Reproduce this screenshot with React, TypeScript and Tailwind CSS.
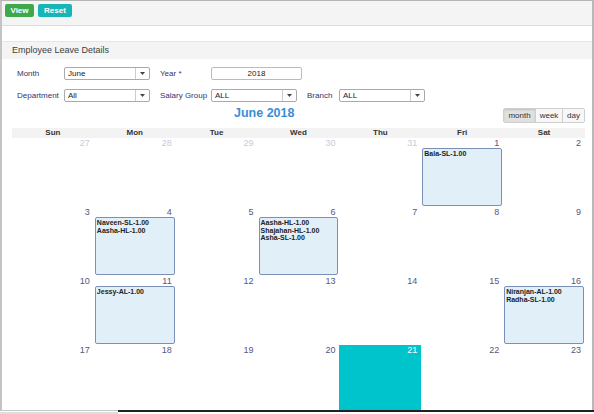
import React from 'react';

type Cell = { day: number; other?: boolean; today?: boolean; events?: string[] };

const weeks: Cell[][] = [
    [
        { day: 27, other: true },
        { day: 28, other: true },
        { day: 29, other: true },
        { day: 30, other: true },
        { day: 31, other: true },
        { day: 1, events: ['Bala-SL-1.00'] },
        { day: 2 },
    ],
    [
        { day: 3 },
        { day: 4, events: ['Naveen-SL-1.00', 'Aasha-HL-1.00'] },
        { day: 5 },
        { day: 6, events: ['Aasha-HL-1.00', 'Shajahan-HL-1.00', 'Asha-SL-1.00'] },
        { day: 7 },
        { day: 8 },
        { day: 9 },
    ],
    [
        { day: 10 },
        { day: 11, events: ['Jessy-AL-1.00'] },
        { day: 12 },
        { day: 13 },
        { day: 14 },
        { day: 15 },
        { day: 16, events: ['Niranjan-AL-1.00', 'Radha-SL-1.00'] },
    ],
    [
        { day: 17 },
        { day: 18 },
        { day: 19 },
        { day: 20 },
        { day: 21, today: true },
        { day: 22 },
        { day: 23 },
    ],
];

const dayNames = ['Sun', 'Mon', 'Tue', 'Wed', 'Thu', 'Fri', 'Sat'];

function Select({ value, width }: { value: string; width: string }) {
    return (
        <div className={`${width} h-[13px] flex items-center bg-white border border-[#aaaaaa] rounded-[2px]`}>
            <span className="flex-1 pl-[3px] text-[8px] leading-none text-[#222]">{value}</span>
            <span className="w-[14px] h-full flex items-center justify-center border-l border-[#cccccc]">
                <svg width="5" height="3" viewBox="0 0 5 3">
                    <path d="M0 0 L5 0 L2.5 3 Z" fill="#444" />
                </svg>
            </span>
        </div>
    );
}

export default function App() {
    return (
        <div
            className="w-[594px] h-[414px] overflow-hidden bg-white flex flex-col"
            style={{ fontFamily: '"Liberation Sans", Arial, sans-serif' }}
        >
            <div className="flex-1 flex flex-col min-h-0 border-t border-[#b5b5b5] border-l-2 border-l-[#c4c4c4] border-r-2 border-r-[#b8b8b8]">
                {/* Toolbar */}
                <div className="h-[25px] bg-[#f4f4f4] border-b border-[#dddddd] flex items-start gap-[4px] pt-[3px] pl-[3px]">
                    <button className="h-[13px] w-[29px] bg-[#3ea94a] text-white text-[8px] font-bold rounded-[2px] leading-none">
                        View
                    </button>
                    <button className="h-[13px] w-[34px] bg-[#17b5b6] text-white text-[8px] font-bold rounded-[2px] leading-none">
                        Reset
                    </button>
                </div>

                <div className="h-[15px]" />

                {/* Section header */}
                <div className="h-[18px] bg-[#f4f4f4] border-t border-[#e6e6e6] flex items-center pl-[10px] text-[9px] text-[#3d3d3d]">
                    Employee Leave Details
                </div>

                {/* Filters */}
                <div className="pl-[15px] pt-[8px] flex flex-col gap-[9px] text-[8px] text-[#33336e]">
                    <div className="flex items-center h-[13px]">
                        <span className="w-[47px]">Month</span>
                        <Select value="June" width="w-[86px]" />
                        <span className="w-[51px] ml-[10px]">Year *</span>
                        <div className="w-[91px] h-[13px] bg-white border border-[#bbbbbb] rounded-[2px] flex items-center justify-center text-[8px] text-[#222]">
                            2018
                        </div>
                    </div>
                    <div className="flex items-center h-[13px]">
                        <span className="w-[47px]">Department</span>
                        <Select value="All" width="w-[86px]" />
                        <span className="w-[51px] ml-[10px]">Salary Group</span>
                        <Select value="ALL" width="w-[86px]" />
                        <span className="w-[32px] ml-[10px]">Branch</span>
                        <Select value="ALL" width="w-[86px]" />
                    </div>
                </div>

                {/* Calendar toolbar */}
                <div className="flex items-start h-[15px] mt-[6px] ml-[10px] w-[573px]">
                    <div className="w-[222px]" />
                    <div className="text-[12.5px] leading-[11px] font-bold text-[#3b8ed6]">June 2018</div>
                    <div className="flex-1" />
                    <div className="flex h-[15px] border border-[#cfcfcf] rounded-[2px] text-[8px] text-[#333] overflow-hidden">
                        <span className="w-[31px] flex items-center justify-center bg-[#e1e1e1] shadow-[inset_0_1px_2px_rgba(0,0,0,0.15)]">month</span>
                        <span className="w-[27px] flex items-center justify-center bg-[#f7f7f7] border-l border-[#cfcfcf]">week</span>
                        <span className="w-[22px] flex items-center justify-center bg-[#f7f7f7] border-l border-[#cfcfcf]">day</span>
                    </div>
                </div>

                {/* Calendar grid */}
                <div className="ml-[10px] w-[573px] mt-[5px] flex-1 min-h-0 overflow-hidden">
                    <div className="grid grid-cols-7 h-[10px] bg-[#f3f3f3]">
                        {dayNames.map((d) => (
                            <div key={d} className="text-center text-[8px] font-bold text-[#333] leading-[10px]">
                                {d}
                            </div>
                        ))}
                    </div>
                    {weeks.map((week, wi) => (
                        <div key={wi} className="grid grid-cols-7 h-[69px]">
                            {week.map((c) => (
                                <div key={c.day} className={`flex flex-col px-[1px] ${c.today ? 'bg-[#00c4cc]' : ''}`}>
                                    <div
                                        className={`text-right pr-[3px] text-[9px] leading-[10px] ${
                                            c.today ? 'text-white' : c.other ? 'text-[#c9c9dc]' : 'text-[#55557e]'
                                        }`}
                                    >
                                        {c.day}
                                    </div>
                                    {c.events && (
                                        <div className="h-[58px] bg-[#e1eff8] border border-[#7b90b6] rounded-[2px] px-[1px] pt-[1px]">
                                            {c.events.map((e) => (
                                                <div key={e} className="text-[7px] font-bold leading-[7.5px] text-[#222]">
                                                    {e}
                                                </div>
                                            ))}
                                        </div>
                                    )}
                                </div>
                            ))}
                        </div>
                    ))}
                </div>
            </div>
            {/* bottom scroll edge */}
            <div className="flex h-[4px] shrink-0">
                <div className="w-[118px] border-t border-[#c8c8c8] border-b-2 border-b-[#dedede]" />
                <div className="flex-1 border-t-2 border-[#222]" />
            </div>
        </div>
    );
}
